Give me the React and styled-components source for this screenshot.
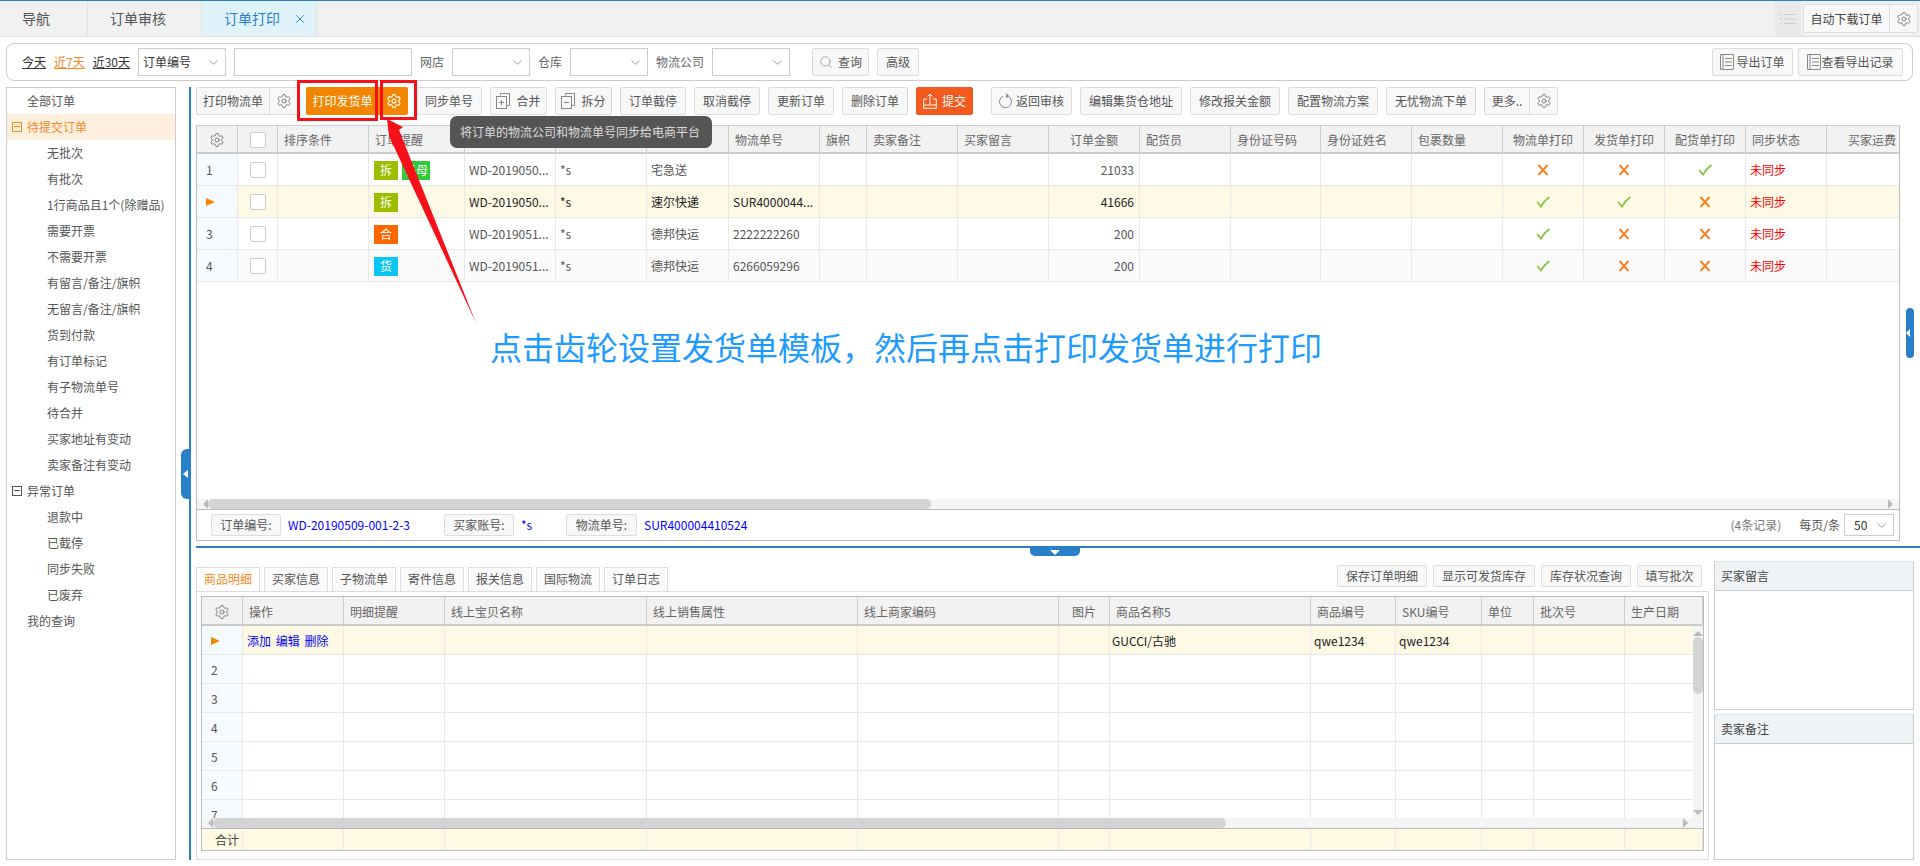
import React from "react";
import styled, { createGlobalStyle } from "styled-components";
import { Settings, X, ChevronDown, Search } from "lucide-react";

const Global = createGlobalStyle`
  html, body { margin: 0; padding: 0; background: #fff; overflow: hidden; }
  * { box-sizing: border-box; }
  body { font: 12px/1.2 "Noto Sans CJK SC", "Microsoft YaHei", sans-serif; color: #555; }
`;

const Page = styled.div`
  position: relative; width: 1920px; height: 866px; background: #fff; overflow: hidden;
`;

/* ---------- top tabs ---------- */
const TopBar = styled.div`
  display: flex; height: 37px; background: #f1f1f1;
  border-top: 1px solid #2a80c8; border-bottom: 1px solid #ddd;
`;
const TopTab = styled.div`
  display: flex; align-items: center; gap: 13px; padding-left: 22px;
  width: ${p => p.$w}px; font-size: 14px; border-right: 1px solid #e2e2e2;
  color: ${p => (p.$active ? "#2a80c8" : "#555")};
  background: ${p => (p.$active ? "#e0f3fb" : "transparent")};
`;
const TopRight = styled.div`
  margin-left: auto; display: flex; align-items: center; padding-right: 2px;
`;
const ListCell = styled.div`
  width: 26px; height: 35px; background: #e9e9e9; display: flex; align-items: center; justify-content: center;
  margin-right: 2px; color: #ccc;
`;
const AutoBtn = styled.div`
  display: flex; height: 29px; background: #f8f8f8; border: 1px solid #ddd; border-radius: 2px; align-items: center; color: #444;
`;
const AutoLabel = styled.span`
  width: 86px; text-align: center; border-right: 1px solid #ddd; line-height: 27px;
`;
const AutoGear = styled.span`
  width: 27px; display: flex; justify-content: center; color: #666;
`;

/* ---------- filter ---------- */
const FilterPanel = styled.div`
  display: flex; align-items: center; gap: 8px; height: 38px; margin: 6px 7px 0 6px;
  padding: 0 9px 0 15px; border: 1px solid #ccc; border-radius: 8px;
`;
const DateLink = styled.a`
  text-decoration: underline; color: ${p => (p.$active ? "#f58a1f" : "#333")};
`;
const Select = styled.div`
  display: flex; align-items: center; justify-content: space-between; padding: 0 4px 0 4px;
  width: ${p => p.$w}px; height: ${p => p.$h || 28}px; background: #fff; border: 1px solid #ccc; color: #333;
`;
const SelectValue = styled.span`margin-left: 5px;`;
const TextInput = styled.div`
  width: 178px; height: 28px; background: #fff; border: 1px solid #ccc;
`;
const FilterLabel = styled.span`color: #666;`;
const Btn = styled.div`
  display: flex; align-items: center; justify-content: center; gap: ${p => p.$gap ?? 3}px; flex: none;
  width: ${p => p.$w}px; height: 28px; margin-left: ${p => p.$ml || 0}px;
  background: #f8f8f8; border: 1px solid #ddd; border-radius: 2px; color: #555;
  white-space: nowrap;
`;
const Spacer = styled.div`margin-left: auto;`;

/* ---------- main ---------- */
const Main = styled.div`
  display: flex; height: 779px; margin-top: 6px; padding-left: 6px;
`;
const Side = styled.div`
  width: 170px; height: 773px; border: 1px solid #ccc; flex: none; margin-right: 13px; background: #fff;
`;
const SideItem = styled.div`
  display: flex; align-items: center; height: 26px; padding-left: ${p => p.$indent}px; position: relative;
  color: ${p => (p.$on ? "#f58a1f" : "#555")}; background: ${p => (p.$on ? "#ffefdf" : "transparent")};
  white-space: nowrap;
`;
const Minus = styled.span`
  position: absolute; left: 5px; top: 8px; width: 10px; height: 10px; border: 1px solid currentColor;
  &::after { content: ""; position: absolute; left: 1px; right: 1px; top: 3px; height: 1px; background: currentColor; }
`;
const VSplit = styled.div`
  width: 2px; height: 773px; background: #2a80c8; flex: none; margin-right: 5px; position: relative;
`;
const VHandle = styled.div`
  position: absolute; left: -8px; top: 362px; width: 9px; height: 50px; background: #2a80c8;
  border-radius: 6px 0 0 6px; display: flex; align-items: center; justify-content: center;
  &::after { content: ""; border: 4px solid transparent; border-right: 5px solid #fff; border-left: 0; }
`;
const Content = styled.div`
  flex: 1; min-width: 0; display: flex; flex-direction: column;
`;
const Toolbar = styled.div`
  display: flex; height: 28px; margin-bottom: 10px;
`;
const Group = styled.div`
  display: flex; flex: none; margin-left: ${p => p.$ml || 0}px; height: 28px;
  background: ${p => (p.$hot ? "#f38600" : "#f8f8f8")};
  color: ${p => (p.$hot ? "#fff" : "#555")};
  border: ${p => (p.$hot ? "0" : "1px solid #ddd")}; border-radius: 2px; align-items: center;
`;
const GroupText = styled.span`
  width: ${p => p.$w}px; text-align: center; line-height: 26px;
  ${p => (p.$div ? "border-right: 1px solid #ddd;" : "")}
`;
const GroupGear = styled.span`
  display: flex; justify-content: center; width: ${p => p.$w}px;
`;
const SubmitBtn = styled(Btn)`
  background: #f35a1d; border-color: #f35a1d; color: #fff;
`;

/* ---------- upper table ---------- */
const UpperPanel = styled.div`
  width: 1704px; height: 416px; display: flex; flex-direction: column; border: 1px solid #bbb; border-top: 0; position: relative;
`;
const GridArea = styled.div`
  flex: 1; min-height: 0; overflow: hidden;
`;
const HeadRow = styled.div`
  display: grid; grid-template-columns: ${p => p.$cols}; height: ${p => p.$h}px;
  border-top: ${p => (p.$noTop ? "0" : "1px solid #ccc")}; border-bottom: 2px solid #ccc; background: #f2f2f2; width: max-content;
`;
const HeadCell = styled.div`
  display: flex; align-items: center; padding: 2px 6px 0; color: #666; white-space: nowrap;
  justify-content: ${p => p.$align || "flex-start"}; border-right: 1px solid #ccc;
`;
const BodyRow = styled.div`
  display: grid; grid-template-columns: ${p => p.$cols}; height: ${p => p.$h}px; width: max-content;
  background: ${p => p.$bg || "#fff"}; color: ${p => p.$fg || "#555"}; border-bottom: 1px solid #e8e8e8;
`;
const Cell = styled.div`
  display: flex; align-items: center; gap: 4px; padding: 1px ${p => p.$pr ?? 4}px 0 ${p => p.$pl ?? 4}px; white-space: nowrap; overflow: hidden;
  justify-content: ${p => p.$align || "flex-start"}; border-right: 1px solid #e8e8e8;
  ${p => (p.$bg ? `background: ${p.$bg};` : "")}
`;
const Check = styled.span`
  width: 16px; height: 16px; background: #fff; border: 1px solid #ccc; border-radius: 2px; display: block;
`;
const Tag = styled.span`
  display: flex; align-items: center; justify-content: center; height: 19px; width: ${p => p.$w || 24}px;
  background: ${p => p.$c}; color: #fff; flex: none;
`;
const Unsync = styled.span`color: #f00;`;
const PlayMark = styled.span`
  display: block; border-left: 9px solid #f38600; border-top: 4px solid transparent; border-bottom: 4px solid transparent;
`;
const HBar = styled.div`
  display: flex; align-items: center; height: 10px; background: #f4f4f4; flex: none;
  padding: 0 ${p => p.$pr}px 0 6px;
`;
const ArrowL = styled.span`
  border: 5px solid transparent; border-right: 5px solid #bbb; border-left: 0;
`;
const ArrowR = styled.span`
  margin-left: auto; border: 5px solid transparent; border-left: 5px solid #bbb; border-right: 0;
`;
const Thumb = styled.span`
  width: ${p => p.$w}px; height: 10px; background: #d4d4d4; border-radius: 5px;
`;
const InfoBar = styled.div`
  display: flex; align-items: center; height: 31px; border-top: 1px solid #bbb; padding: 0 5px 0 14px; flex: none;
`;
const InfoLabel = styled.span`
  display: flex; align-items: center; justify-content: center; width: ${p => p.$w || 70}px; height: 22px; margin-right: ${p => p.$mr || 7}px;
  background: #f8f8f8; border: 1px solid #ddd; border-radius: 2px; color: #555; flex: none;
`;
const InfoValue = styled.span`
  width: ${p => p.$w}px; color: #00f; flex: none;
`;
const Count = styled.span`margin-left: auto; margin-right: 18px; color: #777;`;
const PerPage = styled.span`margin-right: 4px; color: #555;`;
const HSplit = styled.div`
  flex: none; height: 2px; margin-top: 5px; background: #2a80c8; position: relative;
`;
const HHandle = styled.div`
  position: absolute; left: 834px; top: 2px; width: 50px; height: 8px; background: #2a80c8;
  border-radius: 0 0 5px 5px; display: flex; justify-content: center; align-items: flex-start; padding-top: 2px;
  &::after { content: ""; border: 5px solid transparent; border-top: 5px solid #fff; border-bottom: 0; }
`;

/* ---------- lower ---------- */
const Lower = styled.div`
  display: flex; gap: 5px; height: 313px;
`;
const LowerLeft = styled.div`
  width: 1513px; padding-top: 17px; display: flex; flex-direction: column;
`;
const TabRow = styled.div`
  display: flex; align-items: flex-end; height: 26px; padding-right: 7px;
`;
const DetailTab = styled.div`
  display: flex; align-items: center; justify-content: center; width: 64px; height: 24px; margin-right: ${p => p.$mr ?? 4}px;
  background: ${p => (p.$on ? "#fff" : "#fafafa")}; color: ${p => (p.$on ? "#f58a1f" : "#555")};
  border: 1px solid #ddd; border-bottom: 0;
`;
const ActionBtn = styled.div`
  display: flex; align-items: center; justify-content: center; width: ${p => p.$w}px; height: 22px;
  margin-bottom: 4px; margin-left: ${p => p.$ml ?? 6}px; background: #f8f8f8; border: 1px solid #ddd; border-radius: 2px; color: #555;
`;
const DetailBox = styled.div`
  height: 269px; border: 1px solid #ddd; padding: 4px 4px 8px;
`;
const DetailTable = styled.div`
  height: 255px; border: 1px solid #bbb; display: flex; flex-direction: column; overflow: hidden;
`;
const DetailBody = styled.div`
  position: relative; height: 192px; overflow: hidden; flex: none;
`;
const VBar = styled.div`
  position: absolute; right: 0; top: 0; bottom: 0; width: 10px; background: #f4f4f4;
  display: flex; flex-direction: column; align-items: center;
`;
const ArrowU = styled.span`
  margin-top: 5px; border: 5px solid transparent; border-bottom: 5px solid #bbb; border-top: 0;
`;
const ArrowD = styled.span`
  margin-top: auto; margin-bottom: 3px; border: 5px solid transparent; border-top: 5px solid #bbb; border-bottom: 0;
`;
const VThumb = styled.span`
  width: 10px; height: 57px; margin-top: 1px; background: #d4d4d4; border-radius: 5px;
`;
const FootRow = styled.div`
  display: grid; grid-template-columns: ${p => p.$cols}; height: 22px; width: max-content;
  background: #fdf9e3; border-top: 1px solid #bbb; color: #444;
`;
const LinkText = styled.span`color: #00f; word-spacing: 2px;`;
const LowerRight = styled.div`
  width: 200px; padding-top: 13px; display: flex; flex-direction: column; gap: 4px;
`;
const NotePanel = styled.div`
  height: ${p => p.$h}px; border: 1px solid #ccc; border-top-color: #dde3e8; display: flex; flex-direction: column;
`;
const NoteHead = styled.div`
  height: 29px; flex: none; display: flex; align-items: center; padding-left: 6px; background: #eff3f6; color: #444; border-bottom: 1px solid #ccc;
`;

/* ---------- overlays ---------- */
const Tooltip = styled.div`
  position: absolute; left: 450px; top: 116px; width: 262px; height: 32px; padding-left: 10px;
  display: flex; align-items: center; background: #555; color: #ddd; border-radius: 7px; white-space: nowrap;
`;
const RedBox = styled.div`
  position: absolute; left: ${p => p.$x}px; top: 80px; width: ${p => p.$w}px; height: ${p => p.$h}px;
  border: 3px solid #f5101a;
`;
const Note = styled.div`
  position: absolute; left: 490px; top: 325px; font-size: 32px; line-height: 42px; color: #1e9bff; white-space: nowrap;
`;
const ArrowLayer = styled.svg`
  position: absolute; left: 0; top: 0; pointer-events: none;
`;
const RightHandle = styled.div`
  position: absolute; left: 1906px; top: 308px; width: 8px; height: 50px; background: #2a80c8;
  border-radius: 5px; display: flex; align-items: center;
  &::after { content: ""; border: 4px solid transparent; border-right: 4px solid #fff; border-left: 0; }
`;

/* ---------- icons ---------- */
const Gear = ({ size = 16, color = "#666", weight = 1.2 }) => <Settings size={size} color={color} strokeWidth={weight} />;
const Caret = () => <ChevronDown size={15} color="#666" strokeWidth={1} />;
const Cross = () => (
  <svg width="12" height="12" viewBox="0 0 12 12"><path d="M1.5 1 L10.5 11 M10.5 1 L1.5 11" stroke="#f58220" strokeWidth="1.9" fill="none" /></svg>
);
const Tick = () => (
  <svg width="14" height="12" viewBox="0 0 14 12"><path d="M1.2 6 L5 10.6 Q8 5 13.4 1" stroke="#8bc34a" strokeWidth="1.8" fill="none" /></svg>
);
const DocIcon = ({ mode }) => (
  <svg width="14" height="16" viewBox="0 0 14 16" fill="none" stroke="#888">
    <path d="M4.5 2.5 V.5 H13.5 V12.5 H10.5" /><rect x=".5" y="3.5" width="10" height="12" />
    <path d="M3 9.5 H8" />{mode === "plus" && <path d="M5.5 7 V12" />}
  </svg>
);
const ListDoc = () => (
  <svg width="14" height="16" viewBox="0 0 14 16" fill="none" stroke="#888">
    <path d="M.5.5 H13.5 V15.5 H.5 Z M3 .5 V15.5 M5 4.5 H12 M5 8 H12 M5 11.5 H12" />
  </svg>
);
const Upload = () => (
  <svg width="14" height="16" viewBox="0 0 14 16" fill="none" stroke="#fff">
    <path d="M4 6 H.7 V15.3 H13.3 V6 H10 M7 11 V1 M4.5 3.5 L7 1 L9.5 3.5 M.7 12 H13.3" />
  </svg>
);
const Back = () => (
  <svg width="14" height="16" viewBox="0 0 14 16" fill="none" stroke="#888">
    <path d="M8.5 3 A6 6 0 1 1 4 3.2" /><path d="M7 .5 L9.5 3 L7 5" fill="#888" />
  </svg>
);
const ListGlyph = () => (
  <svg width="16" height="12" viewBox="0 0 16 12" fill="none" stroke="#ccc">
    <path d="M0 1.5 H2 M4 1.5 H16 M0 6 H2 M4 6 H16 M0 10.5 H2 M4 10.5 H16" />
  </svg>
);

/* ---------- data ---------- */
const upperW = [41, 40, 91, 96, 91, 91, 82, 91, 47, 91, 91, 91, 91, 90, 91, 91, 81, 81, 81, 81, 91];
const upperCols = upperW.map(w => `${w}px`).join(" ");
/* the three blank heads sit beneath the tooltip */
const upperHead = ["排序条件", "订单提醒", "", "", "", "物流单号", "旗帜", "卖家备注", "买家留言", "订单金额", "配货员", "身份证号码", "身份证姓名", "包裹数量", "物流单打印", "发货单打印", "配货单打印", "同步状态", "买家运费"];
const centered = new Set(["订单金额", "物流单打印", "发货单打印", "配货单打印", "买家运费"]);
const orders = [
  { n: "1", tags: [["拆", "#9cbd00"], ["子母", "#2ecc36", 28]], id: "WD-2019050...", co: "宅急送", no: "", amt: "21033", marks: [0, 0, 1] },
  { n: "", sel: true, tags: [["拆", "#9cbd00"]], id: "WD-2019050...", co: "速尔快递", no: "SUR4000044...", amt: "41666", marks: [1, 1, 0] },
  { n: "3", tags: [["合", "#ff6600"]], id: "WD-2019051...", co: "德邦快运", no: "2222222260", amt: "200", marks: [1, 0, 0] },
  { n: "4", zebra: true, tags: [["货", "#0cc5f2"]], id: "WD-2019051...", co: "德邦快运", no: "6266059296", amt: "200", marks: [1, 0, 0] },
];
const sideItems = [
  ["全部订单", 20], ["待提交订单", 20, "on"], ["无批次", 40], ["有批次", 40], ["1行商品且1个(除赠品)", 40], ["需要开票", 40], ["不需要开票", 40],
  ["有留言/备注/旗帜", 40], ["无留言/备注/旗帜", 40], ["货到付款", 40], ["有订单标记", 40], ["有子物流单号", 40], ["待合并", 40],
  ["买家地址有变动", 40], ["卖家备注有变动", 40], ["异常订单", 20, "tree"], ["退款中", 40], ["已截停", 40], ["同步失败", 40], ["已废弃", 40], ["我的查询", 20],
];
const detailW = [41, 101, 101, 202, 211, 201, 51, 201, 85, 86, 52, 91, 78];
const detailCols = detailW.map(w => `${w}px`).join(" ");
const detailHead = ["操作", "明细提醒", "线上宝贝名称", "线上销售属性", "线上商家编码", "图片", "商品名称5", "商品编号", "SKU编号", "单位", "批次号", "生产日期"];
const blanks = n => Array.from({ length: n }, (_, i) => <Cell key={i} />);

export default function App() {
  return (
    <Page>
      <Global />
      <TopBar>
        <TopTab $w={88}>导航</TopTab>
        <TopTab $w={114}>订单审核</TopTab>
        <TopTab $w={115} $active>订单打印<X size={14} color="#2a80c8" strokeWidth={1.6} /></TopTab>
        <TopRight>
          <ListCell><ListGlyph /></ListCell>
          <AutoBtn><AutoLabel>自动下载订单</AutoLabel><AutoGear><Gear /></AutoGear></AutoBtn>
        </TopRight>
      </TopBar>

      <FilterPanel>
        <DateLink>今天</DateLink>
        <DateLink $active>近7天</DateLink>
        <DateLink>近30天</DateLink>
        <Select $w={88}>订单编号<Caret /></Select>
        <TextInput />
        <FilterLabel>网店</FilterLabel>
        <Select $w={78}><span /><Caret /></Select>
        <FilterLabel>仓库</FilterLabel>
        <Select $w={78}><span /><Caret /></Select>
        <FilterLabel>物流公司</FilterLabel>
        <Select $w={78}><span /><Caret /></Select>
        <Btn $w={57} $ml={14} $gap={5}><Search size={14} color="#888" strokeWidth={1.2} />查询</Btn>
        <Btn $w={42}>高级</Btn>
        <Spacer />
        <Btn $w={81} $gap={2}><ListDoc />导出订单</Btn>
        <Btn $w={105} $ml={-3} $gap={0}><ListDoc />查看导出记录</Btn>
      </FilterPanel>

      <Main>
        <Side>
          {sideItems.map(([t, ind, k]) => (
            <SideItem key={t} $indent={ind} $on={k === "on"}>
              {(k === "on" || k === "tree") && <Minus />}{t}
            </SideItem>
          ))}
        </Side>
        <VSplit><VHandle /></VSplit>
        <Content>
          <Toolbar>
            <Group><GroupText $w={73} $div>打印物流单</GroupText><GroupGear $w={27}><Gear /></GroupGear></Group>
            <Group $ml={8} $hot><GroupText $w={73}>打印发货单</GroupText><GroupGear $w={29}><Gear color="#fff" weight={1.7} /></GroupGear></Group>
            <Btn $w={66} $ml={8}>同步单号</Btn>
            <Btn $w={57} $ml={8} $gap={6}><DocIcon mode="plus" />合并</Btn>
            <Btn $w={57} $ml={8} $gap={6}><DocIcon />拆分</Btn>
            <Btn $w={66} $ml={8}>订单截停</Btn>
            <Btn $w={66} $ml={8}>取消截停</Btn>
            <Btn $w={66} $ml={8}>更新订单</Btn>
            <Btn $w={66} $ml={8}>删除订单</Btn>
            <SubmitBtn $w={57} $ml={8} $gap={5}><Upload />提交</SubmitBtn>
            <Btn $w={81} $ml={18}><Back />返回审核</Btn>
            <Btn $w={102} $ml={8}>编辑集货仓地址</Btn>
            <Btn $w={90} $ml={8}>修改报关金额</Btn>
            <Btn $w={90} $ml={8}>配置物流方案</Btn>
            <Btn $w={90} $ml={8}>无忧物流下单</Btn>
            <Group $ml={8}><GroupText $w={45} $div>更多..</GroupText><GroupGear $w={27}><Gear /></GroupGear></Group>
          </Toolbar>

          <UpperPanel>
            <GridArea>
              <HeadRow $cols={upperCols} $h={29}>
                <HeadCell $align="center"><Gear /></HeadCell>
                <HeadCell $align="center"><Check /></HeadCell>
                {upperHead.map((h, i) => <HeadCell key={i} $align={centered.has(h) ? "center" : undefined}>{h}</HeadCell>)}
              </HeadRow>
              {orders.map((o, i) => (
                <BodyRow key={i} $cols={upperCols} $h={32} $bg={o.sel ? "#fef9e5" : o.zebra ? "#fafafa" : "#fff"} $fg={o.sel ? "#222" : "#555"}>
                  <Cell $bg="#f5fbff" $pl={9}>{o.sel ? <PlayMark /> : o.n}</Cell>
                  <Cell $align="center" $pl={0} $pr={0}><Check /></Cell>
                  <Cell />
                  <Cell $pl={5}>{o.tags.map(([t, c, w]) => <Tag key={t} $c={c} $w={w}>{t}</Tag>)}</Cell>
                  <Cell>{o.id}</Cell>
                  <Cell>*s</Cell>
                  <Cell>{o.co}</Cell>
                  <Cell>{o.no}</Cell>
                  <Cell /><Cell /><Cell />
                  <Cell $align="flex-end" $pr={5}>{o.amt}</Cell>
                  <Cell /><Cell /><Cell /><Cell />
                  {o.marks.map((m, j) => <Cell key={j} $align="center">{m ? <Tick /> : <Cross />}</Cell>)}
                  <Cell><Unsync>未同步</Unsync></Cell>
                  <Cell />
                </BodyRow>
              ))}
            </GridArea>
            <HBar $pr={6}><ArrowL /><Thumb $w={723} /><ArrowR /></HBar>
            <InfoBar>
              <InfoLabel>订单编号:</InfoLabel><InfoValue $w={156}>WD-20190509-001-2-3</InfoValue>
              <InfoLabel>买家账号:</InfoLabel><InfoValue $w={45}>*s</InfoValue>
              <InfoLabel $w={71}>物流单号:</InfoLabel><InfoValue $w={110}>SUR400004410524</InfoValue>
              <Count>(4条记录)</Count>
              <PerPage>每页/条</PerPage>
              <Select $w={50} $h={22}><SelectValue>50</SelectValue><Caret /></Select>
            </InfoBar>
          </UpperPanel>

          <HSplit><HHandle /></HSplit>

          <Lower>
            <LowerLeft>
              <TabRow>
                <DetailTab $on>商品明细</DetailTab>
                <DetailTab>买家信息</DetailTab>
                <DetailTab>子物流单</DetailTab>
                <DetailTab>寄件信息</DetailTab>
                <DetailTab>报关信息</DetailTab>
                <DetailTab>国际物流</DetailTab>
                <DetailTab $mr={0}>订单日志</DetailTab>
                <Spacer />
                <ActionBtn $w={90} $ml={0}>保存订单明细</ActionBtn>
                <ActionBtn $w={102}>显示可发货库存</ActionBtn>
                <ActionBtn $w={90}>库存状况查询</ActionBtn>
                <ActionBtn $w={65}>填写批次</ActionBtn>
              </TabRow>
              <DetailBox>
                <DetailTable>
                  <HeadRow $cols={detailCols} $h={30} $noTop>
                    <HeadCell $align="center"><Gear /></HeadCell>
                    {detailHead.map(h => <HeadCell key={h} $align={h === "图片" ? "center" : undefined}>{h}</HeadCell>)}
                  </HeadRow>
                  <DetailBody>
                    <BodyRow $cols={detailCols} $h={29} $bg="#fef9e5" $fg="#222">
                      <Cell $bg="#f5fbff" $pl={9}><PlayMark /></Cell>
                      <Cell><LinkText>添加 编辑 删除</LinkText></Cell>
                      {blanks(5)}
                      <Cell $pl={2}>GUCCI/古驰</Cell>
                      <Cell $pl={3}>qwe1234</Cell>
                      <Cell $pl={3}>qwe1234</Cell>
                      {blanks(3)}
                    </BodyRow>
                    {[2, 3, 4, 5, 6, 7].map(n => (
                      <BodyRow key={n} $cols={detailCols} $h={29}>
                        <Cell $bg="#f5fbff" $pl={9}>{n}</Cell>
                        {blanks(12)}
                      </BodyRow>
                    ))}
                    <VBar><ArrowU /><VThumb /><ArrowD /></VBar>
                  </DetailBody>
                  <HBar $pr={15}><ArrowL /><Thumb $w={1013} /><ArrowR /></HBar>
                  <FootRow $cols={detailCols}>
                    <Cell $align="flex-end" $pr={3}>合计</Cell>
                    {blanks(12)}
                  </FootRow>
                </DetailTable>
              </DetailBox>
            </LowerLeft>
            <LowerRight>
              <NotePanel $h={149}><NoteHead>买家留言</NoteHead></NotePanel>
              <NotePanel $h={146}><NoteHead>卖家备注</NoteHead></NotePanel>
            </LowerRight>
          </Lower>
        </Content>
      </Main>

      <ArrowLayer width="1920" height="866" viewBox="0 0 1920 866">
        <polygon points="387,119 403,127 399,130 476,323 389,136" fill="#f5101a" />
      </ArrowLayer>
      <RedBox $x={297} $w={81} $h={41} />
      <RedBox $x={380} $w={37} $h={40} />
      <Tooltip>将订单的物流公司和物流单号同步给电商平台</Tooltip>
      <Note>点击齿轮设置发货单模板，然后再点击打印发货单进行打印</Note>
      <RightHandle />
    </Page>
  );
}
